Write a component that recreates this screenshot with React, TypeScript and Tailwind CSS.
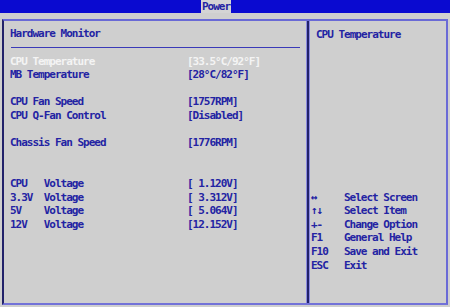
import React from "react";

const font = { fontFamily: '"DejaVu Sans Mono", "Liberation Mono", monospace' };

const rows: ([string, string, boolean] | null)[] = [
  ["CPU Temperature", "[33.5°C/92°F]", true],
  ["MB Temperature", "[28°C/82°F]", false],
  null,
  ["CPU Fan Speed", "[1757RPM]", false],
  ["CPU Q-Fan Control", "[Disabled]", false],
  null,
  ["Chassis Fan Speed", "[1776RPM]", false],
  null,
  null,
  ["CPU   Voltage", "[ 1.120V]", false],
  ["3.3V  Voltage", "[ 3.312V]", false],
  ["5V    Voltage", "[ 5.064V]", false],
  ["12V   Voltage", "[12.152V]", false],
];

const help: [string, string][] = [
  ["↔", "Select Screen"],
  ["↑↓", "Select Item"],
  ["+-", "Change Option"],
  ["F1", "General Help"],
  ["F10", "Save and Exit"],
  ["ESC", "Exit"],
];

export default function App() {
  return (
    <div
      className="w-[450px] h-[307px] bg-[#cfcfcf] overflow-hidden flex flex-col text-[11px] font-bold tracking-[-1px] leading-[13.6px] text-[#2323a3]"
      style={font}
    >
      <div className="h-[13px] bg-[#0a0ad0] flex">
        <div className="ml-[201px] w-[30px] h-[13px] bg-[#d4d4d4] flex items-center justify-center text-[#2323a3] leading-[13px]">
          Power
        </div>
      </div>
      <div className="h-[6px]" />
      <div className="ml-[2px] w-[446px] h-[286px] flex border-t-[2px] border-b-[2px] border-r-[2px] border-l-[2px] border-t-[#6a6ad6] border-b-[#7272d8] border-r-[#6a6ad6] border-l-[#22226a]">
        <div className="w-[302px] flex flex-col pl-[6px] pr-[7px] pt-[6px]">
          <div className="whitespace-pre">Hardware Monitor</div>
          <div className="mt-[6px] h-px bg-[#3a3ab8] w-[289px] ml-px" />
          <div className="mt-[7px] flex flex-col">
            {rows.map((r, i) =>
              r ? (
                <div key={i} className={`flex whitespace-pre ${r[2] ? "text-[#f4f4f4]" : ""}`}>
                  <div className="w-[177px]">{r[0]}</div>
                  <div>{r[1]}</div>
                </div>
              ) : (
                <div key={i} className="h-[13.6px]" />
              )
            )}
          </div>
        </div>
        <div className="w-[3px] flex">
          <div className="w-px bg-[#8a8ae0]" />
          <div className="w-[2px] bg-[#22226a]" />
        </div>
        <div className="flex-1 flex flex-col pt-[7px] pl-[1px] border-l border-[#8a8ae0]">
          <div className="pl-[5px] whitespace-pre">CPU Temperature</div>
          <div className="mt-[149px] flex flex-col">
            {help.map(([k, d]) => (
              <div key={k} className="flex whitespace-pre">
                <div className="w-[33px]">{k}</div>
                <div>{d}</div>
              </div>
            ))}
          </div>
        </div>
      </div>
    </div>
  );
}
